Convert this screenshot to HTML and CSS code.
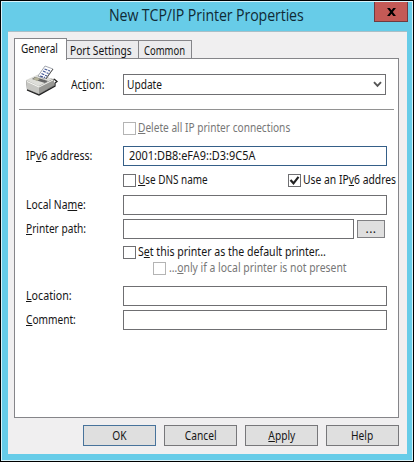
FILE: index.html
```html
<!DOCTYPE html>
<html lang="en">
<head>
<meta charset="utf-8">
<title>New TCP/IP Printer Properties</title>
<link rel="stylesheet" href="styles.css">
</head>
<body>
<div class="window">
  <header class="titlebar">
    <h1>New TCP/IP Printer Properties</h1>
    <button class="close" aria-label="Close"><svg width="9" height="8" viewBox="0 0 10 9"><path d="M0 0H3L5 2.5L7 0H10L6.5 4.5L10 9H7L5 6.5L3 9H0L3.5 4.5Z"/></svg></button>
  </header>
  <main class="body">
    <nav class="tabs">
      <span class="tab active"><span class="t-general">General</span></span>
      <span class="tab port"><span class="t-port">Port Settings</span></span>
      <span class="tab common"><span class="t-common">Common</span></span>
    </nav>
    <section class="panel">
      <div class="row action">
        <svg class="printer" width="34" height="32" viewBox="0 0 34 32">
          <path d="M1 16L13 10L28 14L29 21L14 30L2 25Z" fill="#777"/>
          <path d="M1 15L13 9.500L28 14L14 22Z" fill="#deded9"/>
          <path d="M1 15L14 21V29L2 24Z" fill="#c6c6c2"/>
          <path d="M14 21L29 13.500V20L14 29Z" fill="#989894"/>
          <path d="M2 16.500L14 22L28 15" fill="none" stroke="#f6f6f2"/>
          <path d="M2 25L14 30L30 21V18L32 16.500L29 14" fill="none" stroke="#222" stroke-width="1.300"/>
          <path d="M10 12L23 16L20 18L7 14Z" fill="#666"/>
          <path d="M8 14L11 12L15 14L12 16Z" fill="#b4b29a"/>
          <path d="M13 11L20 1L28 4L20 14Z" fill="#fff" stroke="#8d929b" stroke-width=".8"/>
          <path d="M19.500 4L25 6M18 6L23.500 8.500M16.500 8.500L22 11M15 11L20 12.500" stroke="#415694" stroke-width="1.100" stroke-dasharray="3 1"/>
          <path d="M28 4L21 14" stroke="#555"/>
        </svg>
        <label class="w-action">Ac<u>t</u>ion:</label>
        <div class="field select"><span class="w-update">Update</span><svg width="9" height="7" viewBox="0 0 9 7"><path d="M1 1.200L4.500 4.800L8 1.200" fill="none" stroke="#555" stroke-width="1.900"/></svg></div>
      </div>
      <div class="divider"></div>
      <div class="check disabled delete"><i></i><span class="w-delete"><u>D</u>elete all IP printer connections</span></div>
      <div class="row ip"><label class="w-ip">IP<u>v</u>6 address:</label><div class="field focus"><span class="w-value">2001:DB8:eFA9::D3:9C5A</span></div></div>
      <div class="options">
        <div class="check dns"><i></i><span class="w-dns"><u>U</u>se DNS name</span></div>
        <div class="check ipv6"><i><svg width="11" height="11" viewBox="0 0 11 11"><path d="M1.500 5L4.500 8.300L9.500 1.800" fill="none" stroke="#222" stroke-width="2.200"/></svg></i><span class="w-use">Use an IP<u>v</u>6 addres</span></div>
      </div>
      <div class="row local"><label class="w-local">Local Na<u>m</u>e:</label><div class="field"></div></div>
      <div class="row path"><label class="w-path"><u>P</u>rinter path:</label><div class="field"></div><button class="browse">...</button></div>
      <div class="check default"><i></i><span class="w-default">S<u>e</u>t this printer as the default printer…</span></div>
      <div class="check disabled only"><i></i><span class="w-only">…<u>o</u>nly if a local printer is not present</span></div>
      <div class="row location"><label class="w-location"><u>L</u>ocation:</label><div class="field"></div></div>
      <div class="row comment"><label class="w-comment"><u>C</u>omment:</label><div class="field"></div></div>
    </section>
    <footer class="buttons">
      <button class="primary"><span>OK</span></button>
      <button><span>Cancel</span></button>
      <button><span><u>A</u>pply</span></button>
      <button><span>Help</span></button>
    </footer>
  </main>
</div>
</body>
</html>
```
FILE: styles.css
```css
* { box-sizing: border-box; }
body {
  margin: 0;
  width: 414px;
  height: 462px;
  overflow: hidden;
  background: #000;
  padding: 1px;
  font: 12px/14px "Noto Sans", sans-serif;
  color: #161616;
}
.window {
  width: 412px;
  height: 460px;
  background: #67cce8;
  border: 1px solid #d9f3fa;
  padding: 0 5px 5px 6px;
}
.titlebar { position: relative; height: 29px; }
h1 {
  margin: 0 0 0 101px;
  font: 16px/27px "Open Sans", sans-serif;
  letter-spacing: -.1px;
  color: #102a35;
  white-space: nowrap;
  transform: scaleX(.884);
  transform-origin: left;
}
button { font: inherit; color: inherit; padding: 0; }
.close {
  position: absolute;
  right: -1px;
  top: 0;
  width: 34px;
  height: 20px;
  background: #c45a56;
  border: 1px solid #6f3a40;
  border-top: 0;
  display: flex;
  align-items: center;
  justify-content: center;
}
.body {
  width: 399px;
  height: 423px;
  background: #f0eff0;
  border-top: 1px solid #a9bfc7;
  padding: 6px 7px 0 6px;
}
.tabs { display: flex; align-items: flex-end; height: 20px; white-space: nowrap; }
.tab {
  height: 18px;
  border: 1px solid #858589;
  border-bottom: 0;
  border-left: 0;
  padding: 2px 0 0 4px;
  line-height: 15px;
  background: #ebebed;
}
.tab.active {
  position: relative;
  z-index: 1;
  width: 53px;
  height: 22px;
  margin-bottom: -2px;
  border-left: 1px solid #858589;
  background: #fff;
  padding: 2px 0 0 6px;
}
.port { width: 72px; padding-left: 3px; }
.common { width: 53px; padding-left: 5px; }
.panel {
  width: 385px;
  height: 360px;
  background: #fff;
  border: 1px solid #858589;
  padding: 7px 0 0 11px;
}
.row { display: flex; align-items: center; height: 20px; white-space: nowrap; }
.row > label { width: 97px; flex: none; }
.field {
  width: 264px;
  height: 20px;
  border: 1px solid #6f6f72;
  background: #fff;
  line-height: 18px;
  padding-left: 5px;
}
.focus { border-color: #355f88; }
.action { height: 40px; padding-bottom: 3px; }
.printer { width: 34px; height: 32px; margin: -7px 12px 0 -1px; flex: none; }
.row.action > label { width: 52px; }
.select {
  width: 263px;
  height: 21px;
  display: flex;
  align-items: center;
  justify-content: space-between;
  padding: 0 3px 0 3px;
}
.divider { height: 1px; width: 375px; background: #929292; margin: 3px 0 0 -7px; }
.check { display: flex; align-items: center; height: 14px; white-space: nowrap; }
.check i { width: 13px; height: 13px; border: 1px solid #6f6f72; flex: none; margin-right: 2px; }
.check i svg { display: block; }
.disabled { color: #777; }
.disabled i { border-color: #b4b4b4; }
.delete { margin: 11px 0 0 97px; }
.ip { margin-top: 11px; }
.options { display: flex; margin: 7px 0 0 97px; width: 276px; height: 14px; }
.dns { width: 165px; flex: none; }
.ipv6 { width: 108px; }
.local { margin-top: 8px; }
.path { margin-top: 4px; }
.path .field { width: 231px; }
.browse { width: 28px; height: 18px; margin-left: 3px; border: 1px solid #808083; background: #dfdfdf; line-height: 14px; letter-spacing: .5px; }
.default { margin: 6px 0 0 97px; }
.only { margin: 2px 0 0 127px; }
.only i { margin-right: 3px; }
.location { margin-top: 11px; }
.comment { margin-top: 4px; }
.buttons { display: flex; gap: 8px; margin: 7px 0 0 69px; }
.buttons button { width: 73px; height: 21px; border: 1px solid #77777a; background: #dfdfdf; }
.buttons .primary { border-color: #48739b; }
.buttons span { display: inline-block; transform: scaleX(.85); }

/* Condensed widths for the dialog's captions */
[class^="w-"], [class^="t-"] { display: inline-block; transform-origin: left; }
.t-general { transform: scaleX(.834); }
.t-port { transform: scaleX(.849); }
.t-common { transform: scaleX(.79); }
.w-action { transform: scaleX(.862); }
.w-update { transform: scaleX(.846); }
.w-delete { transform: scaleX(.844); }
.w-ip { transform: scaleX(.884); }
.w-value { transform: scaleX(.91); }
.w-dns { transform: scaleX(.828); }
.w-use { transform: scaleX(.863); }
.w-local { transform: scaleX(.863); }
.w-path { transform: scaleX(.846); }
.w-default { transform: scaleX(.881); }
.w-only { transform: scaleX(.866); }
.w-location { transform: scaleX(.888); }
.w-comment { transform: scaleX(.844); }
```
